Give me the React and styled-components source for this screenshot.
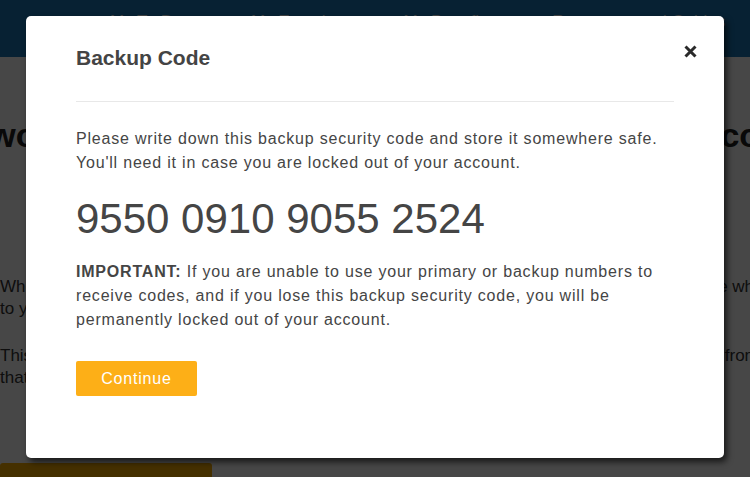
import React from "react";
import styled, { createGlobalStyle } from "styled-components";

const GlobalStyle = createGlobalStyle`
  html, body {
    margin: 0;
    padding: 0;
    background: #fff;
    font-family: "Liberation Sans", Arial, Helvetica, sans-serif;
    overflow: hidden;
  }
`;

const Page = styled.div`
  width: 750px;
  height: 477px;
  overflow: hidden;
  position: relative;
  background: #fff;
`;

const Header = styled.header`
  height: 57px;
  background: #1a76b6;
  display: flex;
  align-items: flex-start;
  padding-left: 110px;
  gap: 60px;
`;

const NavItem = styled.a`
  color: #f2f6fa;
  font-size: 17px;
  line-height: 20px;
  padding-top: 12px;
  white-space: nowrap;
  text-decoration: none;
`;

const Content = styled.main`
  display: flex;
  flex-direction: column;
`;

const Heading = styled.h1`
  margin: 58px 0 0 -29px;
  font-size: 34px;
  line-height: 40px;
  font-weight: bold;
  color: #222;
  white-space: nowrap;
`;

const Para = styled.p`
  margin: ${p => p.$top}px 0 0 0;
  font-size: 17px;
  line-height: 22px;
  color: #333;
  white-space: nowrap;
`;

const YellowBar = styled.div`
  margin-top: ${p => p.$top}px;
  width: 212px;
  height: 40px;
  background: #f6ab00;
  border-radius: 3px 3px 0 0;
`;

const Overlay = styled.div`
  position: absolute;
  inset: 0;
  background: rgba(0, 0, 0, 0.72);
  display: flex;
  justify-content: center;
  align-items: flex-start;
  padding-top: 16px;
`;

const Modal = styled.div`
  position: relative;
  width: 698px;
  height: 442px;
  box-sizing: border-box;
  background: #fff;
  border-radius: 5px;
  box-shadow: 3px 4px 6px rgba(0, 0, 0, 0.65);
  padding: 29px 50px 0;
  color: #444;
`;

const ModalHeader = styled.div`
  display: flex;
  align-items: flex-start;
  justify-content: space-between;
  padding-bottom: 30px;
  border-bottom: 1px solid #e8e8e8;
`;

const Title = styled.h2`
  margin: 0;
  font-size: 21px;
  line-height: 26px;
  font-weight: bold;
  color: #444;
`;

const Close = styled.button`
  position: absolute;
  top: 29px;
  right: 27px;
  width: 13px;
  height: 13px;
  padding: 0;
  border: 0;
  background: none;
  cursor: pointer;
  display: flex;
  svg { display: block; }
`;

const Text = styled.p`
  margin: ${p => p.$top}px 0 0;
  font-size: 16px;
  line-height: 24px;
  letter-spacing: 0.8px;
  color: #454545;
  white-space: nowrap;
`;

const Code = styled.div`
  margin-top: 19px;
  font-size: 42px;
  line-height: 50px;
  color: #454545;
`;

const Button = styled.button`
  margin-top: 29px;
  width: 121px;
  height: 35px;
  border: 0;
  border-radius: 2px;
  background: #fdaf17;
  color: #fff;
  font-family: "Liberation Sans", Arial, sans-serif;
  font-size: 16px;
  letter-spacing: 0.8px;
  cursor: pointer;
`;

export default function App() {
  return (
    <>
      <GlobalStyle />
      <Page>
        <Header>
          <NavItem>My To-Dos</NavItem>
          <NavItem>My Exercise</NavItem>
          <NavItem>My Benefits</NavItem>
          <NavItem>Resources and Guides</NavItem>
        </Header>
        <Content>
          <Heading>Two-Step Verification for your member plan account</Heading>
          <Para $top={121}>When you sign in from a new device, we will send a one-time security code by text to your phone which you'll enter.</Para>
          <Para $top={0}>to your account.</Para>
          <Para $top={25}>This extra step helps to keep your account secure, even if somebody else learns your password from another device.</Para>
          <Para $top={0}>that account.</Para>
          <YellowBar $top={74} />
        </Content>
        <Overlay>
          <Modal>
            <ModalHeader>
              <Title>Backup Code</Title>
            </ModalHeader>
            <Close aria-label="Close">
              <svg width="13" height="13" viewBox="0 0 13 13">
                <path d="M1.5 1.5 L11.5 11.5 M11.5 1.5 L1.5 11.5" stroke="#2a2a2a" strokeWidth="3" />
              </svg>
            </Close>
            <Text $top={25}>
              Please write down this backup security code and store it somewhere safe.
              <br />
              You'll need it in case you are locked out of your account.
            </Text>
            <Code>9550 0910 9055 2524</Code>
            <Text $top={16}>
              <b>IMPORTANT:</b> If you are unable to use your primary or backup numbers to
              <br />
              receive codes, and if you lose this backup security code, you will be
              <br />
              permanently locked out of your account.
            </Text>
            <Button>Continue</Button>
          </Modal>
        </Overlay>
      </Page>
    </>
  );
}
